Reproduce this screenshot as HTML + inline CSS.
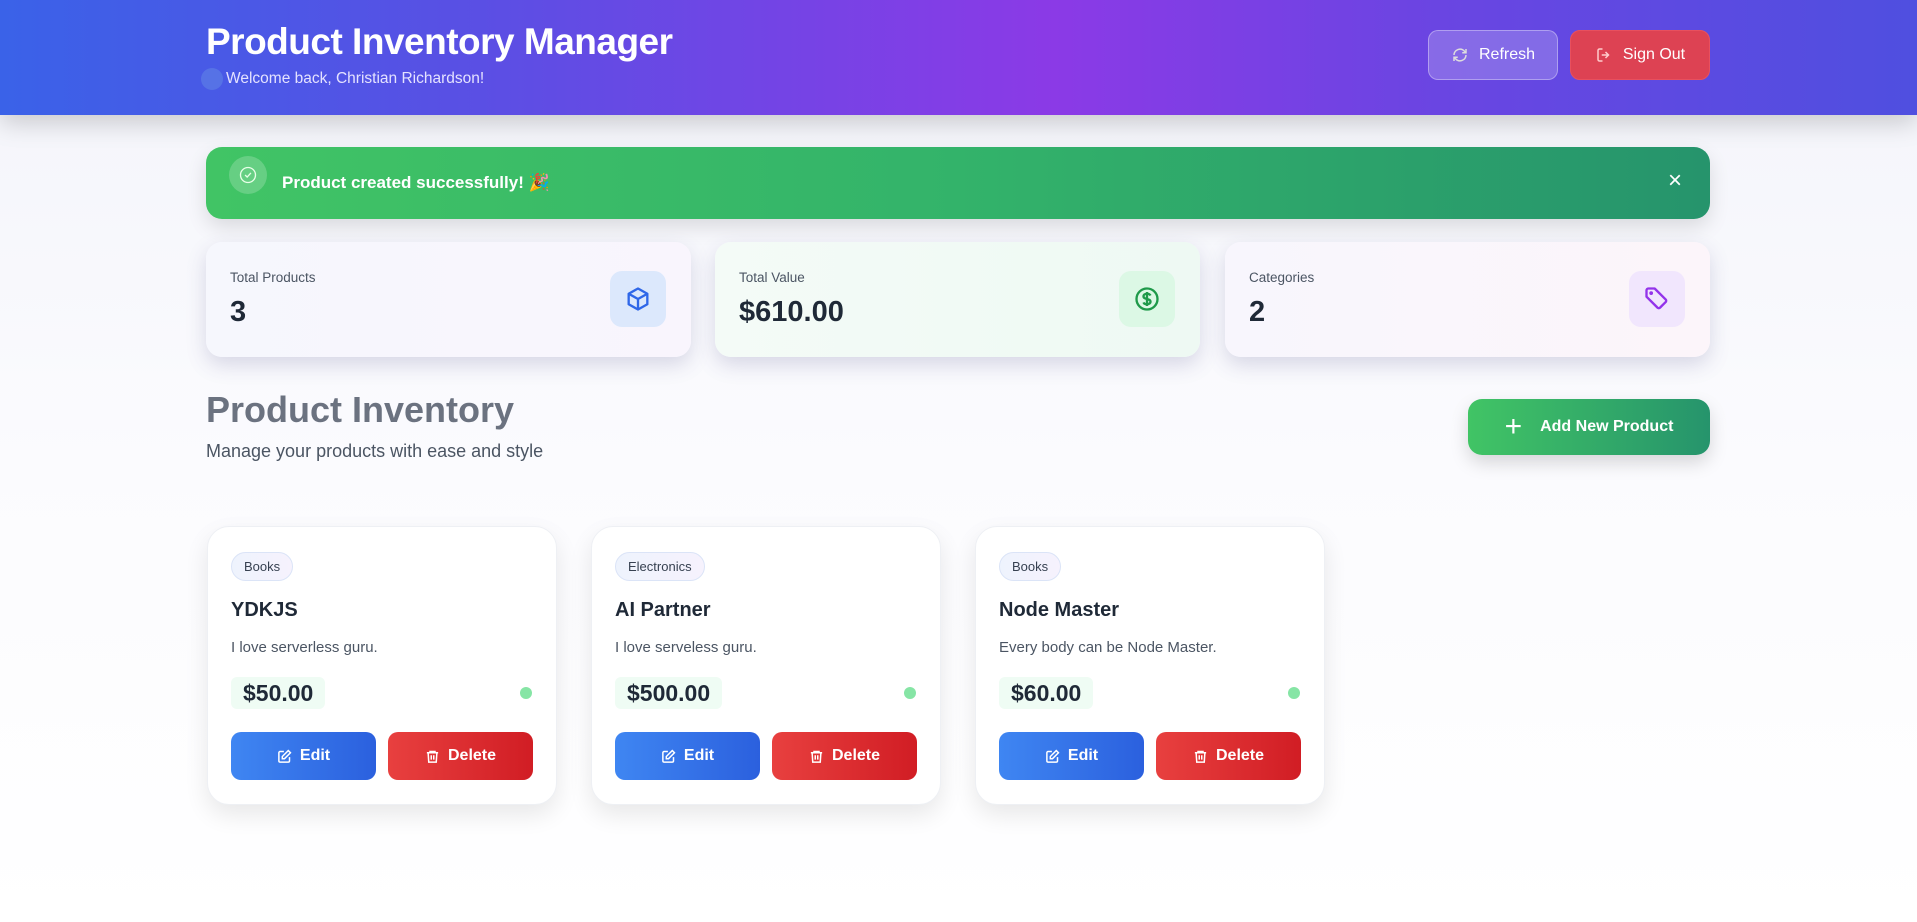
<!DOCTYPE html>
<html><head><meta charset="utf-8"><style>
*{box-sizing:border-box;margin:0;padding:0}
body{width:1917px;height:922px;overflow:hidden;font-family:"Liberation Sans",sans-serif;background:linear-gradient(180deg,#f3f4fa 0%,#fbfbfe 50%,#fff 100%);position:relative}
.hdr{position:absolute;left:0;top:0;width:1917px;height:115px;background:linear-gradient(90deg,#3a62e8 0%,#5a4fe4 25%,#8b3ae6 55%,#6a45e2 75%,#4f4fe0 100%);box-shadow:0 8px 24px rgba(0,0,0,.18)}
.title{position:absolute;left:206px;top:21px;color:#fff;font-size:37px;font-weight:bold;letter-spacing:-0.5px}
.welcome{position:absolute;left:226px;top:70px;color:#e4e2ff;font-size:15.5px}
.dot{position:absolute;left:201px;top:68px;width:22px;height:22px;border-radius:50%;background:rgba(90,120,230,.8)}
.btn{position:absolute;top:30px;height:50px;border-radius:10px;color:#fff;font-size:16px;display:flex;align-items:center;justify-content:center;gap:10px}
.alert{position:absolute;left:206px;top:147px;width:1504px;height:72px;border-radius:16px;background:linear-gradient(90deg,#41c465,#33b36a 50%,#26946c);box-shadow:0 8px 20px rgba(0,0,0,.12)}
.card{position:absolute;top:242px;width:485px;height:115px;border-radius:16px;box-shadow:0 8px 20px rgba(60,60,120,.18)}
.card .l{position:absolute;left:24px;top:28px;font-size:13.5px;color:#4b5563}
.card .v{position:absolute;left:24px;top:54px;font-size:29px;font-weight:bold;color:#1f2937}
.card .ic{position:absolute;right:25px;top:29px;width:56px;height:56px;border-radius:12px;display:flex;align-items:center;justify-content:center}
.pc{position:absolute;top:526px;width:350px;height:279px;background:#fff;border-radius:22px;border:1px solid #eef0f4;box-shadow:0 10px 24px rgba(0,0,0,.09)}
.badge{position:absolute;left:23px;top:25px;height:29px;padding:0 12px;border-radius:15px;border:1px solid #dbe4f7;background:linear-gradient(90deg,#eef3fd,#f6f2fd);font-size:13px;color:#374151;line-height:27px}
.pn{position:absolute;left:23px;top:72px;font-size:20px;font-weight:bold;color:#1f2937}
.pd{position:absolute;left:23px;top:112px;font-size:15px;color:#4b5563}
.pr{position:absolute;left:23px;top:150px;height:32px;padding:0 12px;background:#effcf4;border-radius:6px;font-size:23px;font-weight:bold;color:#1f2937;line-height:32px}
.gd{position:absolute;right:24px;top:160px;width:12px;height:12px;border-radius:50%;background:#86e5a5}
.b{position:absolute;top:205px;width:145px;height:48px;border-radius:10px;color:#fff;font-size:16px;font-weight:bold;display:flex;align-items:center;justify-content:center;gap:8px}
.e{left:23px;background:linear-gradient(90deg,#3f86f2,#2b60de)}
.d{left:180px;background:linear-gradient(90deg,#e8403f,#d11d24)}
</style></head><body>
<div class="hdr">
<div class="title">Product Inventory Manager</div>
<div class="dot"></div>
<div class="welcome">Welcome back, Christian Richardson!</div>
<div class="btn" style="left:1428px;width:130px;background:rgba(255,255,255,.2);border:1px solid rgba(255,255,255,.35)"><svg width="18" height="18" viewBox="0 0 24 24" fill="none" stroke="#ddd" stroke-width="2"><path d="M4 12a8 8 0 0 1 14-5l2 2M20 12a8 8 0 0 1-14 5l-2-2"/><path d="M20 4v5h-5M4 20v-5h5"/></svg>Refresh</div>
<div class="btn" style="left:1570px;width:140px;background:#dd4253;border:1px solid #e8505e"><svg width="18" height="18" viewBox="0 0 24 24" fill="none" stroke="#fcc" stroke-width="2"><path d="M10 4H6a2 2 0 0 0-2 2v12a2 2 0 0 0 2 2h4M14 8l4 4-4 4M18 12H9"/></svg>Sign Out</div>
</div>
<div class="alert">
<div style="position:absolute;left:23px;top:9px;width:38px;height:38px;border-radius:50%;background:rgba(255,255,255,.2);display:flex;align-items:center;justify-content:center"><svg width="20" height="20" viewBox="0 0 24 24" fill="none" stroke="#e8ffe8" stroke-width="1.6"><circle cx="12" cy="12" r="9"/><path d="M8.5 12l2.5 2.5 4.5-5"/></svg></div>
<div style="position:absolute;left:76px;top:26px;color:#fff;font-size:17px;font-weight:bold">Product created successfully! 🎉</div>
<div style="position:absolute;right:28px;top:20px;color:#fff;font-size:24px">×</div>
</div>
<div class="card" style="left:206px;background:linear-gradient(90deg,#f6f7fd,#f9f5fd)"><div class="l">Total Products</div><div class="v">3</div><div class="ic" style="background:#dce8fc"><svg width="28" height="28" viewBox="0 0 24 24" fill="none" stroke="#2f67e8" stroke-width="2" stroke-linejoin="round"><path d="M12 3l8 4.5v9L12 21l-8-4.5v-9z"/><path d="M4 7.5l8 4.5 8-4.5M12 12v9"/></svg></div></div>
<div class="card" style="left:715px;background:linear-gradient(90deg,#f4fbf7,#eef9f3)"><div class="l">Total Value</div><div class="v">$610.00</div><div class="ic" style="background:#dcf8e5"><svg width="28" height="28" viewBox="0 0 24 24" fill="none" stroke="#1f9a4a" stroke-width="2"><circle cx="12" cy="12" r="9"/><path d="M15 9c-.5-1-1.6-1.5-3-1.5-1.7 0-3 .8-3 2.2 0 3 6 1.6 6 4.6 0 1.4-1.3 2.2-3 2.2-1.4 0-2.6-.6-3-1.6M12 6v12"/></svg></div></div>
<div class="card" style="left:1225px;background:linear-gradient(90deg,#f8f6fd,#fcf5fa)"><div class="l">Categories</div><div class="v">2</div><div class="ic" style="background:#f1e6fd"><svg width="28" height="28" viewBox="0 0 24 24" fill="none" stroke="#9333ea" stroke-width="2" stroke-linejoin="round"><path d="M3 4.5V10l9.5 9.5a1.5 1.5 0 0 0 2 0l5-5a1.5 1.5 0 0 0 0-2L10 3H4.5A1.5 1.5 0 0 0 3 4.5z"/><circle cx="7" cy="7" r=".6" fill="#9333ea"/></svg></div></div>
<div style="position:absolute;left:206px;top:389px;font-size:36px;font-weight:bold;color:#6b7280">Product Inventory</div>
<div style="position:absolute;left:206px;top:441px;font-size:18px;color:#4b5563">Manage your products with ease and style</div>
<div style="position:absolute;left:1468px;top:399px;width:242px;height:56px;border-radius:14px;background:linear-gradient(90deg,#41c465,#26946c);box-shadow:0 8px 18px rgba(0,0,0,.15);color:#fff;font-size:16px;font-weight:bold;display:flex;align-items:center;justify-content:center;gap:18px"><span style="font-size:30px;font-weight:normal;line-height:1">+</span>Add New Product</div>

<div class="pc" style="left:207px"><div class="badge">Books</div><div class="pn">YDKJS</div><div class="pd">I love serverless guru.</div><div class="pr">$50.00</div><div class="gd"></div><div class="b e"><svg width="15" height="15" viewBox="0 0 24 24" fill="none" stroke="#fff" stroke-width="2.4"><path d="M11 4H5a2 2 0 0 0-2 2v13a2 2 0 0 0 2 2h13a2 2 0 0 0 2-2v-6"/><path d="M18 2.5l3.5 3.5L12 15.5H8.5V12z"/></svg>Edit</div><div class="b d"><svg width="15" height="15" viewBox="0 0 24 24" fill="none" stroke="#fff" stroke-width="2.4"><path d="M3 6h18M8 6V4h8v2M5 6l1 15h12l1-15M10 10v7M14 10v7"/></svg>Delete</div></div>
<div class="pc" style="left:591px"><div class="badge">Electronics</div><div class="pn">AI Partner</div><div class="pd">I love serveless guru.</div><div class="pr">$500.00</div><div class="gd"></div><div class="b e"><svg width="15" height="15" viewBox="0 0 24 24" fill="none" stroke="#fff" stroke-width="2.4"><path d="M11 4H5a2 2 0 0 0-2 2v13a2 2 0 0 0 2 2h13a2 2 0 0 0 2-2v-6"/><path d="M18 2.5l3.5 3.5L12 15.5H8.5V12z"/></svg>Edit</div><div class="b d"><svg width="15" height="15" viewBox="0 0 24 24" fill="none" stroke="#fff" stroke-width="2.4"><path d="M3 6h18M8 6V4h8v2M5 6l1 15h12l1-15M10 10v7M14 10v7"/></svg>Delete</div></div>
<div class="pc" style="left:975px"><div class="badge">Books</div><div class="pn">Node Master</div><div class="pd">Every body can be Node Master.</div><div class="pr">$60.00</div><div class="gd"></div><div class="b e"><svg width="15" height="15" viewBox="0 0 24 24" fill="none" stroke="#fff" stroke-width="2.4"><path d="M11 4H5a2 2 0 0 0-2 2v13a2 2 0 0 0 2 2h13a2 2 0 0 0 2-2v-6"/><path d="M18 2.5l3.5 3.5L12 15.5H8.5V12z"/></svg>Edit</div><div class="b d"><svg width="15" height="15" viewBox="0 0 24 24" fill="none" stroke="#fff" stroke-width="2.4"><path d="M3 6h18M8 6V4h8v2M5 6l1 15h12l1-15M10 10v7M14 10v7"/></svg>Delete</div></div>
</body></html>
